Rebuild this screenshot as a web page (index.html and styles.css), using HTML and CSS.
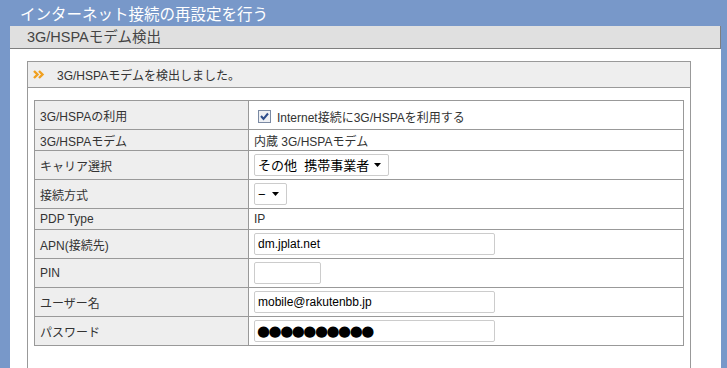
FILE: index.html
```html
<!DOCTYPE html>
<html lang="ja">
    <head>
        <meta charset="utf-8"/>
        <title>インターネット接続の再設定を行う</title>
        <link rel="stylesheet" href="styles.css">
    </head>
    <body>
        <div class="page">
            <h1 class="title">インターネット接続の再設定を行う</h1>
            <div class="panel">
                <h2 class="panel-head">3G/HSPAモデム検出</h2>
                <div class="panel-body">
                    <div class="box">
                        <div class="box-head">
                            <svg class="mark" width="12" height="9" viewBox="0 0 12 9">
                                <polyline points="1,1 4.5,4.5 1,8" fill="none" stroke="#f0a020" stroke-width="2.4"/>
                                <polyline points="6,1 9.5,4.5 6,8" fill="none" stroke="#f0a020" stroke-width="2.4"/>
                            </svg>
                            3G/HSPAモデムを検出しました。
                        </div>
                        <table class="form">
                            <tr class="ctl">
                                <th>3G/HSPAの利用</th>
                                <td>
                                    <label class="check">
                                        <input type="checkbox" checked>
                                        <svg class="box-mark" width="13" height="13" viewBox="0 0 13 13">
                                            <rect x="0.5" y="0.5" width="12" height="12" fill="#eef0f4" stroke="#7b8aa3"/>
                                            <polyline points="3,6 5.5,9 10,3.5" fill="none" stroke="#2d4d8c" stroke-width="2"/>
                                        </svg>
                                        Internet接続に3G/HSPAを利用する
                                    </label>
                                </td>
                            </tr>
                            <tr class="txt">
                                <th>3G/HSPAモデム</th>
                                <td>内蔵 3G/HSPAモデム</td>
                            </tr>
                            <tr class="ctl">
                                <th>キャリア選択</th>
                                <td>
                                    <span class="select wide">
                                        <select><option>その他&nbsp;&nbsp;携帯事業者</option></select>
                                        <svg class="arrow" width="7" height="4" viewBox="0 0 7 4"><polygon points="0,0 7,0 3.5,4" fill="#000"/></svg>
                                    </span>
                                </td>
                            </tr>
                            <tr class="ctl">
                                <th>接続方式</th>
                                <td>
                                    <span class="select narrow">
                                        <select><option>−</option></select>
                                        <svg class="arrow" width="7" height="4" viewBox="0 0 7 4"><polygon points="0,0 7,0 3.5,4" fill="#000"/></svg>
                                    </span>
                                </td>
                            </tr>
                            <tr class="txt">
                                <th>PDP Type</th>
                                <td>IP</td>
                            </tr>
                            <tr class="ctl">
                                <th>APN(接続先)</th>
                                <td><input type="text" class="field long" value="dm.jplat.net"></td>
                            </tr>
                            <tr class="ctl">
                                <th>PIN</th>
                                <td><input type="text" class="field short" value=""></td>
                            </tr>
                            <tr class="ctl">
                                <th>ユーザー名</th>
                                <td><input type="text" class="field long" value="mobile@rakutenbb.jp"></td>
                            </tr>
                            <tr class="ctl">
                                <th>パスワード</th>
                                <td><input type="text" class="field long secret" value="●●●●●●●●●●"></td>
                            </tr>
                        </table>
                    </div>
                </div>
            </div>
        </div>
    </body>
</html>
```

FILE: styles.css
```css
body {
    margin: 0;
    background: #7898c9;
    font-family: "Liberation Sans", "Noto Sans CJK JP", sans-serif;
    color: #333;
}

.page {
    padding: 0 6px 0 10px;
}

.title {
    margin: 0;
    height: 26px;
    padding: 3px 0 0 10px;
    box-sizing: border-box;
    font-size: 15.5px;
    line-height: 21px;
    font-weight: normal;
    color: #fff;
    font-family: "Noto Sans CJK JP", sans-serif;
}

.panel {
    background: #fff;
    min-height: 342px;
}

.panel-head {
    margin: 0;
    height: 22px;
    padding-left: 17px;
    background: #e0e0e0;
    border-bottom: 1px solid #7f7f7f;
    border-right: 1px solid #7f7f7f;
    font-size: 14.5px;
    line-height: 22px;
    font-weight: normal;
    color: #444;
}

.panel-body {
    padding: 12px 30px 0 17px;
}

.box {
    border: 1px solid #999;
    border-bottom: none;
    padding-bottom: 40px;
}

.box-head {
    height: 25px;
    padding-left: 5px;
    background: #eee;
    border-bottom: 1px solid #999;
    font-size: 12px;
    display: flex;
    align-items: center;
    gap: 12px;
}

.form {
    margin: 12px 6px 0 6px;
    width: calc(100% - 12px);
    border-collapse: collapse;
    font-size: 12px;
}

.form th,
.form td {
    border: 1px solid #999;
    padding: 0 5px;
    text-align: left;
    font-weight: normal;
    vertical-align: middle;
}

.form th {
    width: 203px;
    background: #eee;
}

.form tr.ctl th,
.form tr.ctl td {
    height: 28px;
}

.form tr.txt th,
.form tr.txt td {
    height: 20px;
}

.check {
    display: flex;
    align-items: center;
    gap: 6px;
    padding: 2px 0 0 4px;
}

.check input {
    display: none;
}

.select {
    position: relative;
    display: inline-block;
}

.select select {
    appearance: none;
    height: 22px;
    border: 1px solid #ccc;
    border-radius: 2px;
    background: #fff;
    font-family: "Liberation Sans", "Noto Sans CJK JP", sans-serif;
    font-size: 13px;
    color: #000;
    padding: 0 0 0 3px;
    margin: 0;
}

.select.wide select {
    width: 135px;
}

.select.narrow select {
    width: 33px;
}

.select .arrow {
    position: absolute;
    right: 8px;
    top: 9px;
}

.field {
    height: 22px;
    box-sizing: border-box;
    border: 1px solid #ccc;
    border-radius: 2px;
    padding: 0 3px;
    margin: 0;
    font-family: "Liberation Sans", "Noto Sans CJK JP", sans-serif;
    font-size: 12px;
    color: #000;
}

.field.long {
    width: 241px;
}

.field.short {
    width: 67px;
}

.field.secret {
    font-family: "DejaVu Sans", sans-serif;
    font-size: 15px;
    letter-spacing: -1.5px;
    padding-left: 2px;
}
```
